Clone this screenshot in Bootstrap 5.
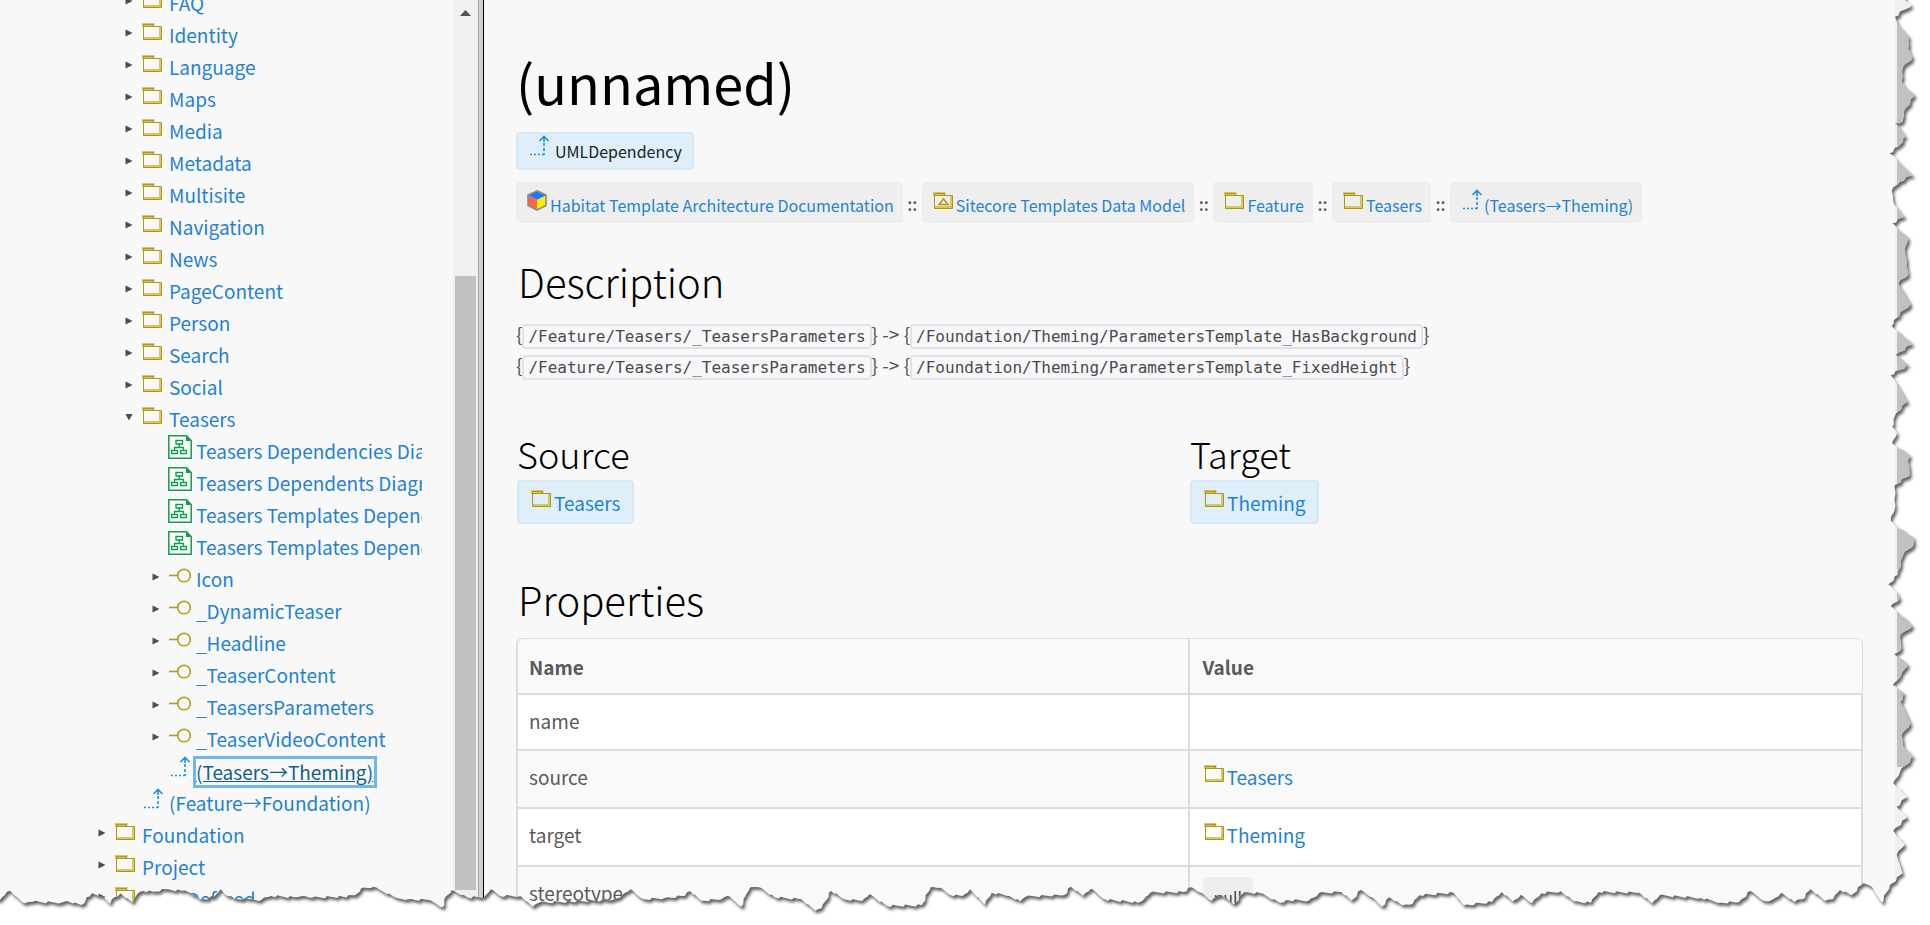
<!DOCTYPE html>
<html lang="en">
<head>
<meta charset="utf-8">
<meta name="viewport" content="width=device-width, initial-scale=1">
<title>(unnamed) – Habitat Template Architecture Documentation</title>
<link href="https://cdn.jsdelivr.net/npm/bootstrap@5.3.0/dist/css/bootstrap.min.css" rel="stylesheet">
<style>
  :root { --paper: #f8f8f8; --link: #1f82d6; --line: #dcdcdc; }
  body { font-family: "Noto Sans CJK JP", "Open Sans", sans-serif; font-size: 19px; line-height: 32px; color: #555; background: var(--paper); }
  a { color: var(--link); text-decoration: none; }
  a:hover { text-decoration: underline; }
  .ico { width: 24px; height: 24px; flex: none; }

  /* navigation tree */
  .side { width: 453px; max-width: 40vw; padding: 0 31px 0 92px; }
  .tree { margin-top: -13px; }
  .tree ul { padding-left: 27px; }
  .node { height: 32px; white-space: nowrap; }
  .twist { width: 22px; flex: none; height: 28px; padding: 0 0 0 6px; border: 0; background: none; display: flex; align-items: center; }
  .node .ico { margin-right: 4px; }
  .node a.active { color: #125f8c; text-decoration: underline; outline: 3px solid #70b4f0; height: 26px; line-height: 26px; margin-top: 4px; padding-right: 1px; }
  .rail { width: 25px; background: #f0f0f0; flex: none; }
  .rail .thumb { position: absolute; left: 2px; width: 21px; background: #c1c1c1; }
  .split { width: 6px; flex: none; background: #d0d0d0; border-left: 1px solid #a6a6a6; border-right: 1px solid #000; }

  /* document pane */
  .doc { padding: 44px 32px 0; min-width: 0; }
  .doc h1 { font-size: 54px; line-height: 76px; color: #000; font-weight: 400; margin-bottom: 12px; }
  .doc h2 { font-size: 40px; line-height: 54px; color: #000; font-weight: 300; padding-left: 2px; }
  .doc h3 { font-size: 36px; line-height: 46px; color: #000; font-weight: 300; }
  .tag { background: #dfeffa; border: 2px solid #d6e8f4; border-radius: 4px; }
  .kind { font-size: 16px; height: 38px; padding: 0 10px 0 9px; color: #222; }
  .kind .ico, .crumb .ico { align-self: flex-start; }
  .crumb { font-size: 16px; height: 41px; padding: 4px 9px 0 10px; border-radius: 4px; background: #eee; }
  .crumb .ico { margin-top: 2px; }
  .crumb a { line-height: 38px; }
  .sep { width: 19px; text-align: center; line-height: 44px; font-size: 17px; font-weight: 500; }
  .desc { line-height: 31px; padding: 2px 0; }
  .desc code { font: 16px/20px "DejaVu Sans Mono", monospace; color: #4a4a4a; background: #f7f7fa; border: 2px solid #e1e1e8; border-radius: 4px; padding: 1px 4px; }
  .ends { padding-left: 1px; }
  .end { height: 44px; padding: 2px 11px 0 11px; }
  .end .ico { align-self: flex-start; margin-top: 2px; }
  .props { table-layout: fixed; border-collapse: separate; border-spacing: 0; border: 1px solid var(--line); border-radius: 6px; color: #5a5a5a; }
  .props th, .props td { padding: 10px 11px; height: 56px; line-height: 32px; border: 0 solid var(--line); border-bottom-width: 2px; background: #f9f9f9; }
  .props tr > :first-child { border-right-width: 2px; border-left: 1px solid var(--line); }
  .props tr > :last-child { border-right: 1px solid var(--line); padding-left: 13px; }
  .props thead tr > :first-child { border-top-left-radius: 6px; }
  .props thead tr > :last-child { border-top-right-radius: 6px; border-right: 0; }
  .props tbody tr:nth-child(odd) > * { background: #fff; }
  .props .tall td { height: 58px; }
  .null { display: inline-block; font-size: 16px; background: #eee; border-radius: 4px; padding: 0 11px; height: 41px; line-height: 41px; color: #444; }

  .rightrail { width: 35px; }
  .torn { position: absolute; inset: 0; width: 100%; height: 100%; pointer-events: none; }
</style>
</head>
<body class="vh-100 overflow-hidden position-relative">

<svg class="d-none" aria-hidden="true">
  <symbol id="folder" viewBox="0 0 24 24"><path fill="none" stroke="#d6c66a" stroke-width="3" d="M2.5 8V5.5H12V8M2.5 19.5H20M19.5 8V20"/><path fill="none" stroke="#b0960c" d="M2.5 7.500V5.500H12.500V7.500M2.500 7.500H20.500V20.500H2.500Z"/></symbol>
  <symbol id="model" viewBox="0 0 24 24"><use href="#folder"/><path fill="none" stroke="#b0960c" stroke-width="1.500" d="M7 16.500H16L11.500 11Z"/></symbol>
  <symbol id="iface" viewBox="0 0 24 24"><g fill="none" stroke="#b79c10" stroke-width="1.600"><circle cx="16" cy="12.500" r="6.300"/><path d="M1 12.500H9.500"/></g></symbol>
  <symbol id="dep" viewBox="0 0 24 24"><g fill="none" stroke="#1c90d8"><path stroke-width="1.600" d="M12.500 7L17 2.500L21.500 7M17 3V8"/><path stroke-width="1.600" stroke-dasharray="3 2" d="M17 9V21"/><path stroke-width="1.300" stroke-dasharray="2 2" d="M3 20.500H18"/></g></symbol>
  <symbol id="diagram" viewBox="0 0 24 24"><path fill="#fff" stroke="#0c9d4c" stroke-width="1.500" d="M.8.800H18.500L23.200 5.500V23.200H.8Z"/><path fill="#0c9d4c" d="M18 1V6H23Z"/><g fill="none" stroke="#0c9d4c" stroke-width="1.300"><path d="M8 5.500H14.500V9H8ZM3.500 15.500H9.500V18.500H3.500ZM12.500 15.500H18.500V18.500H12.500ZM11.200 9V12.500M6.500 15.500V12.500H15.500V15.500"/></g></symbol>
  <symbol id="cube" viewBox="0 0 24 24"><path fill="#2277ff" d="M11 3L20 7.500L11 12L2 7.500Z"/><path fill="#ff6644" d="M2 7.500L11 12V22L2 17.500Z"/><path fill="#f4f400" d="M20 7.500L11 12V22L20 17.500Z"/><path fill="none" stroke="#8a8a8a" stroke-width="1.600" d="M11 2.800L20 7V17.500L11 22L2 17.500V7Z"/></symbol>
  <symbol id="closed" viewBox="0 0 8 8"><path fill="#4d4d4d" d="M.5.500L7.500 4L.5 7.500Z"/></symbol>
  <symbol id="open" viewBox="0 0 8 8"><path fill="#4d4d4d" d="M.5 1H7.500L4 7.500Z"/></symbol>
</svg>

<div class="d-flex h-100">
  <nav class="side overflow-hidden flex-shrink-0" aria-label="Model tree">
    <div class="overflow-hidden h-100">
    <ul class="tree list-unstyled mb-0" id="tree"></ul>
    </div>
  </nav>
  <div class="rail position-relative" aria-hidden="true">
    <svg class="d-block mx-auto" width="11" height="16" viewBox="0 0 11 16"><path fill="#505050" d="M5.500 10L11 16H0Z"/></svg>
    <div class="thumb" style="top:29.800%;bottom:3.800%"></div>
  </div>
  <div class="split"></div>

  <main class="doc flex-grow-1">
    <h1>(unnamed)</h1>
    <div><span class="tag kind d-inline-flex align-items-center"><svg class="ico me-1"><use href="#dep"/></svg>UMLDependency</span></div>
    <nav class="d-flex mt-2 pt-1" aria-label="Path">
      <span class="crumb d-flex"><svg class="ico"><use href="#cube"/></svg><a href="#">Habitat Template Architecture Documentation</a></span><span class="sep">::</span>
      <span class="crumb d-flex"><svg class="ico"><use href="#model"/></svg><a href="#">Sitecore Templates Data Model</a></span><span class="sep">::</span>
      <span class="crumb d-flex"><svg class="ico"><use href="#folder"/></svg><a href="#">Feature</a></span><span class="sep">::</span>
      <span class="crumb d-flex"><svg class="ico"><use href="#folder"/></svg><a href="#">Teasers</a></span><span class="sep">::</span>
      <span class="crumb d-flex"><svg class="ico"><use href="#dep"/></svg><a href="#">(Teasers→Theming)</a></span>
    </nav>

    <h2 class="mt-4 pt-1 mb-2">Description</h2>
    <p class="desc mb-0">{<code>/Feature/Teasers/_TeasersParameters</code>} -&gt; {<code>/Foundation/Theming/ParametersTemplate_HasBackground</code>}<br>{<code>/Feature/Teasers/_TeasersParameters</code>} -&gt; {<code>/Foundation/Theming/ParametersTemplate_FixedHeight</code>}</p>

    <div class="row g-0 mt-5 ends">
      <div class="col-6">
        <h3 class="mb-1">Source</h3>
        <a class="tag end d-inline-flex align-items-center" href="#"><svg class="ico"><use href="#folder"/></svg>Teasers</a>
      </div>
      <div class="col-6">
        <h3 class="mb-1">Target</h3>
        <a class="tag end d-inline-flex align-items-center" href="#"><svg class="ico"><use href="#folder"/></svg>Theming</a>
      </div>
    </div>

    <h2 class="mt-5 mb-2 pb-1">Properties</h2>
    <table class="props table mb-0">
      <thead><tr><th scope="col">Name</th><th scope="col">Value</th></tr></thead>
      <tbody>
        <tr><td>name</td><td></td></tr>
        <tr class="tall"><td>source</td><td><a class="d-flex" href="#"><svg class="ico"><use href="#folder"/></svg>Teasers</a></td></tr>
        <tr class="tall"><td>target</td><td><a class="d-flex" href="#"><svg class="ico"><use href="#folder"/></svg>Theming</a></td></tr>
        <tr class="tall"><td>stereotype</td><td><span class="null">null</span></td></tr>
      </tbody>
    </table>
  </main>
  <div class="rail rightrail position-relative" aria-hidden="true"><div class="thumb" style="top:2.500%;bottom:17.100%"></div></div>
</div>

<svg class="torn" viewBox="0 0 1930 925" preserveAspectRatio="none" aria-hidden="true">
  <defs>
    <clipPath id="outside"><path id="cut"/></clipPath>
    <filter id="soft" x="-5%" y="-5%" width="110%" height="110%"><feGaussianBlur stdDeviation="1.600"/></filter>
  </defs>
  <path id="blank" fill="#fff"/>
  <g clip-path="url(#outside)"><path id="shade" fill="#4a4a4a" fill-opacity=".85" transform="translate(2 3)" filter="url(#soft)"/></g>
</svg>

<script src="https://cdn.jsdelivr.net/npm/bootstrap@5.3.0/dist/js/bootstrap.bundle.min.js"></script>
<script>
  // Tree rows: [label, icon, state, children]
  const f = (label, kids) => [label, 'folder', kids ? 'open' : 'closed', kids];
  const d = label => [label, 'diagram', ''];
  const t = label => [label, 'iface', 'closed'];
  const dep = (label, on) => [label, 'dep', on ? 'active' : ''];
  const features = ['FAQ','Identity','Language','Maps','Media','Metadata','Multisite','Navigation','News','PageContent','Person','Search','Social'].map(n => f(n));
  const teasers = f('Teasers', [d('Teasers Dependencies Diagram'), d('Teasers Dependents Diagram'), d('Teasers Templates Dependencies Diagram'), d('Teasers Templates Dependents Diagram'),
    t('Icon'), t('_DynamicTeaser'), t('_Headline'), t('_TeaserContent'), t('_TeasersParameters'), t('_TeaserVideoContent'), dep('(Teasers→Theming)', true)]);
  const row = ([label, icon, state, kids]) => {
    const mark = state === 'open' || state === 'closed';
    const twist = mark
      ? `<button class="twist" type="button" aria-label="Toggle ${label}"><svg width="8" height="8"><use href="#${state}"/></svg></button>`
      : '<span class="twist"></span>';
    return `<li><div class="node d-flex">${twist}<svg class="ico"><use href="#${icon}"/></svg><a href="#"${state === 'active' ? ' class="active"' : ''}>${label}</a></div>${kids ? `<ul class="list-unstyled">${kids.map(row).join('')}</ul>` : ''}</li>`;
  };
  document.getElementById('tree').innerHTML =
    `<li><ul class="list-unstyled">${[...features, teasers, dep('(Feature→Foundation)')].map(row).join('')}</ul></li>` +
    [f('Foundation'), f('Project'), f('User Defined')].map(row).join('');

  // Torn paper edge: strips of points, each with its origin and scale
  const strips = [
    [0, 860, 2.45, '0,120 12,105 25,92 38,108 60,130 80,125 150,128 163,123 200,135 208,128 212,112 225,100 250,108 270,132 280,112 295,100 325,128 335,105 350,93 375,95 405,88 445,92 465,98 490,118 525,112 540,88 550,102 575,116 610,118 640,120 665,108 720,112 740,108 765,113 840,110 870,106 885,85 915,80 940,96 975,115 1000,118 1050,120 1085,142 1092,110 1107,90 1130,105 1145,112 1185,112 1195,100 1203,88 1225,108 1275,108 1305,140 1320,128 1400,125 1500,120 1525,105 1545,88'],
    [640, 860, 2.45, '0,112 8,118 60,114 110,108 122,93 150,122 200,118 215,107 248,140 262,100 270,82 292,82 330,112 395,118 430,152 445,145 468,93 500,118 545,122 562,103 605,138 690,136 712,82 735,83 760,105 790,108 808,88 845,134 862,98 905,108 932,124 945,110 1040,105 1055,80 1085,107 1105,86 1138,118 1220,128 1235,118 1250,98 1330,96 1352,82 1375,98 1400,122 1425,105 1455,133 1480,97 1520,100'],
    [1280, 860, 2.45, '0,128 15,120 70,122 95,100 150,96 175,122 198,90 225,112 250,140 268,112 300,136 325,132 342,106 425,98 450,136 520,126 543,96 570,124 590,104 618,130 640,100 688,94 720,124 762,128 780,96 880,98 912,130 930,106 1030,114 1080,128 1125,126 1152,93 1185,122 1205,120 1228,98 1260,126 1280,118 1300,88 1335,122 1355,118 1372,90 1400,106'],
    [1780, 460, 3, '250,1270 275,1280 305,1328 330,1275 368,1240 350,1185 375,1152 352,1130 340,1112 382,1072 350,1040 382,1010 340,970 360,935 402,890 370,860 365,825 392,790 362,725 375,700 338,675 362,650 385,612 343,583 365,565 360,530 398,495 352,455 332,438 360,415 350,395 325,373 353,345 370,285 402,252 400,230 350,200 332,182 345,145 345,75 390,45 385,0'],
    [1780, 0, 3, '392,1365 350,1340 336,1330 352,1300 337,1280 348,1240 383,1205 350,1150 332,1125 388,1095 347,1065 398,1032 335,978 342,960 392,912 355,850 385,825 375,745 385,712 352,685 337,670 375,650 342,612 335,572 360,545 400,525 365,495 348,475 328,460 355,440 378,410 360,385 345,370 368,365 372,335 405,285 385,270 365,245 370,200 398,172 385,145 388,110 370,90 355,75 345,50 395,14 375,0']
  ];
  const pts = strips.flatMap(([ox, oy, sx, s]) => s.split(' ').map(p => { const [x, y] = p.split(',').map(Number); return [ox + x / sx, oy + y / 3]; }));
  // Small teeth between the main points
  const rough = [];
  pts.forEach((p, i) => {
    rough.push(p);
    const q = pts[i + 1];
    if (!q) return;
    const n = Math.floor(Math.hypot(q[0] - p[0], q[1] - p[1]) / 3);
    for (let k = 1; k < n; k++) {
      const j = ((i * 7 + k * 5) % 4 - 1.5) * 0.7;
      rough.push([p[0] + (q[0] - p[0]) * k / n + j * .5, p[1] + (q[1] - p[1]) * k / n + j]);
    }
  });
  const line = 'M' + rough.map(p => p.map(v => v.toFixed(1)).join(' ')).join('L');
  const area = line + 'L1930 0V925H0Z';
  document.getElementById('cut').setAttribute('d', area);
  document.getElementById('blank').setAttribute('d', area);
  document.getElementById('shade').setAttribute('d', line + 'L1905 -30H-30V900Z');
</script>
</body>
</html>
